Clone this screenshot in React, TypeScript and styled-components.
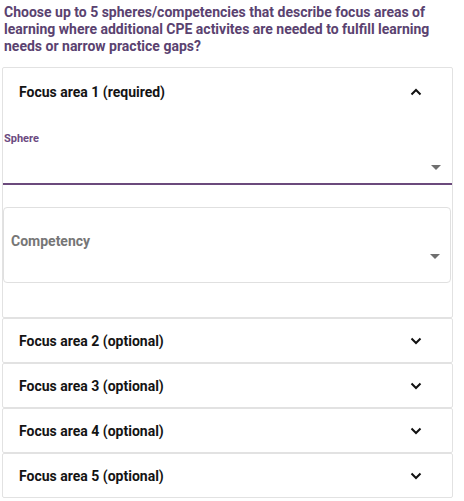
import React from "react";
import styled, { createGlobalStyle } from "styled-components";

const Global = createGlobalStyle`
  html, body { margin: 0; padding: 0; background: #ffffff; }
  body { font-family: Roboto, "Liberation Sans", Arial, sans-serif; }
  * { box-sizing: border-box; }
`;

const Page = styled.div`
  width: 464px;
  padding: 4px 0 0 2px;
  display: flex;
  flex-direction: column;
`;

const Question = styled.p`
  margin: 0 0 12px 2px;
  font-size: 14px;
  line-height: 17px;
  font-weight: 700;
  color: #5a4270;
  width: 440px;
`;

const List = styled.div`
  width: 451px;
  display: flex;
  flex-direction: column;
`;

const Panel = styled.section`
  border: 1px solid #e2e2e2;
  border-radius: 2px;
  background: #fff;
`;

const Header = styled.div<{ $tall?: boolean }>`
  height: ${(p) => (p.$tall ? 48 : 43)}px;
  display: flex;
  align-items: center;
  justify-content: space-between;
  padding: 0 30px 0 16px;
  font-size: 14px;
  font-weight: 700;
  color: #141414;
`;

const Content = styled.div`
  padding: 16px 0 34px 0;
  display: flex;
  flex-direction: column;
`;

const StandardField = styled.div`
  display: flex;
  flex-direction: column;
  margin-bottom: 22px;
`;

const SmallLabel = styled.label`
  font-size: 11px;
  line-height: 13px;
  font-weight: 700;
  color: #6b4a80;
  padding-left: 1px;
`;

const StandardInput = styled.div`
  height: 40px;
  border-bottom: 2px solid #6b4a7c;
  display: flex;
  justify-content: flex-end;
  align-items: flex-start;
  padding: 20px 11px 0 0;
`;

const OutlinedField = styled.div`
  height: 76px;
  border: 1px solid #e0e0e0;
  border-radius: 4px;
  margin-right: 1px;
  display: flex;
  justify-content: space-between;
  padding: 25px 10px 0 7px;
`;

const FieldLabel = styled.span`
  font-size: 14px;
  line-height: 17px;
  font-weight: 700;
  color: #767676;
`;

const ArrowWrap = styled.span<{ $top?: number }>`
  display: flex;
  margin-top: ${(p) => p.$top ?? 0}px;
`;

const Caret = () => (
  <svg width="10" height="5" viewBox="0 0 10 5">
    <path d="M0 0 L10 0 L5 5 Z" fill="#6f6f6f" />
  </svg>
);

const Chevron = ({ up }: { up?: boolean }) => (
  <svg width="12" height="8" viewBox="0 0 12 8">
    <path
      d={up ? "M1.5 6.5 L6 2 L10.5 6.5" : "M1.5 1.5 L6 6 L10.5 1.5"}
      fill="none"
      stroke="#111111"
      strokeWidth="2"
    />
  </svg>
);

export default function App() {
  return (
    <>
      <Global />
      <Page>
        <Question>
          Choose up to 5 spheres/competencies that describe focus areas of learning where
          additional CPE activites are needed to fulfill learning needs or narrow practice gaps?
        </Question>
        <List>
          <Panel>
            <Header $tall>
              <span>Focus area 1 (required)</span>
              <Chevron up />
            </Header>
            <Content>
              <StandardField>
                <SmallLabel>Sphere</SmallLabel>
                <StandardInput>
                  <Caret />
                </StandardInput>
              </StandardField>
              <OutlinedField>
                <FieldLabel>Competency</FieldLabel>
                <ArrowWrap $top={21}>
                  <Caret />
                </ArrowWrap>
              </OutlinedField>
            </Content>
          </Panel>
          {[2, 3, 4, 5].map((n) => (
            <Panel key={n}>
              <Header>
                <span>Focus area {n} (optional)</span>
                <Chevron />
              </Header>
            </Panel>
          ))}
        </List>
      </Page>
    </>
  );
}
